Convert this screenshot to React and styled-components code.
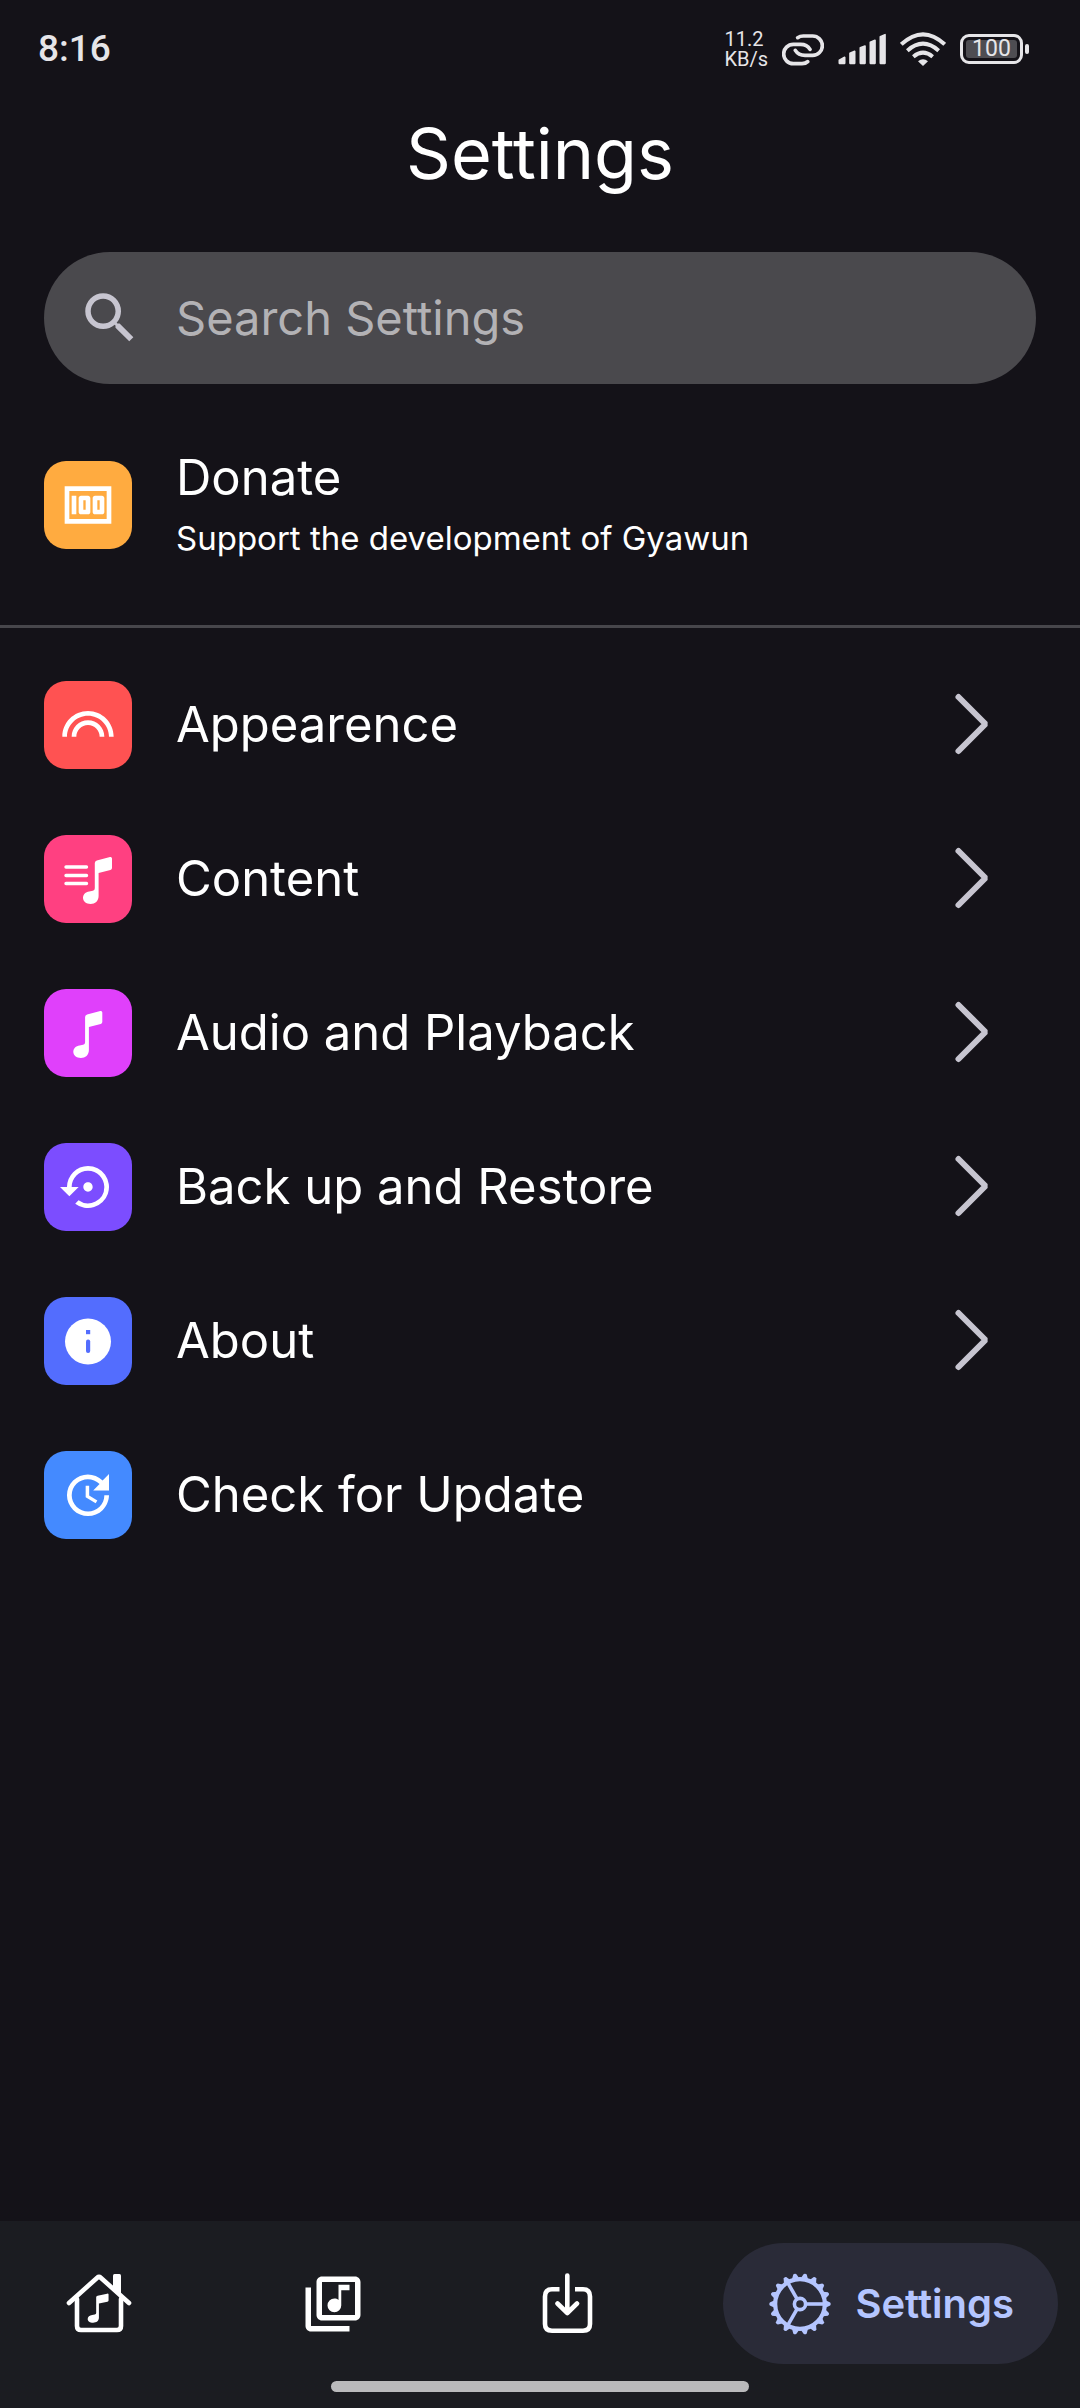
import React from "react";
import styled, { createGlobalStyle } from "styled-components";
import {
  MdLooks,
  MdMoney,
  MdOutlineLibraryMusic,
  MdSearch,
  MdSettingsBackupRestore,
  MdUpdate,
} from "react-icons/md";

const GlobalStyle = createGlobalStyle`
  *, *::before, *::after { box-sizing: border-box; }
  body {
    margin: 0;
    background: #141218;
    color: #fff;
    font-family: Inter, "Open Sans", sans-serif;
  }
  button, input { font: inherit; color: inherit; }
  svg { display: block; flex: none; }
`;

const Screen = styled.div`
  display: flex;
  flex-direction: column;
  min-height: 100vh;
`;

const StatusBar = styled.div`
  display: flex;
  align-items: center;
  justify-content: space-between;
  height: 98px;
  padding: 0 51px 0 38px;
  color: #e6e5e8;
  font-family: Roboto, sans-serif;
`;

const Clock = styled.time`
  font-size: 37px;
  font-weight: 500;
  line-height: 44px;
`;

const StatusIcons = styled.div`
  display: flex;
  align-items: center;
  gap: 14px;
`;

const NetSpeed = styled.div`
  display: flex;
  flex-direction: column;
  font-size: 20px;
  line-height: 20px;
`;

const Battery = styled.div`
  display: flex;
  align-items: center;
  gap: 2px;

  &::after {
    content: "";
    width: 4px;
    height: 10px;
    border-radius: 2px;
    background: #e6e5e8;
  }
`;

const BatteryBody = styled.div`
  width: 63px;
  height: 30px;
  padding: 3px;
  border: 3px solid #e6e5e8;
  border-radius: 9px;
`;

const BatteryLevel = styled.div`
  height: 18px;
  border-radius: 3px;
  background: #4e4d52;
  font-size: 23px;
  line-height: 18px;
  text-align: center;
`;

const Title = styled.h1`
  margin: 0;
  padding: 16px 44px 58px;
  font-size: 70px;
  font-weight: 400;
  line-height: 80px;
  text-align: center;
`;

const Main = styled.main`
  flex: 1;
`;

const SearchBox = styled.label`
  display: flex;
  align-items: center;
  gap: 33px;
  height: 132px;
  margin: 0 44px 44px;
  padding: 0 33px;
  border-radius: 66px;
  background: #4a494d;
  color: #c7c5d0;
`;

const SearchInput = styled.input`
  flex: 1;
  min-width: 0;
  padding: 0;
  border: 0;
  outline: 0;
  background: none;
  color: #fff;
  font-size: 47px;
  line-height: 60px;

  &::placeholder {
    color: #b3b2b5;
    opacity: 1;
  }
`;

const List = styled.ul`
  margin: 0;
  padding: 0;
  list-style: none;
`;

const RowButton = styled.button`
  display: flex;
  align-items: center;
  gap: 44px;
  width: 100%;
  height: 154px;
  padding: 0 66px 0 44px;
  border: 0;
  background: none;
  text-align: left;
  cursor: pointer;
`;

const Tile = styled.span`
  display: flex;
  align-items: center;
  justify-content: center;
  flex: none;
  width: 88px;
  height: 88px;
  border-radius: 22px;
  background: ${(p) => p.$color};
`;

const RowText = styled.span`
  flex: 1;
  padding-top: ${(p) => (p.$stacked ? "6px" : "0")};
`;

const RowTitle = styled.span`
  display: block;
  font-size: 49px;
  line-height: 60px;
`;

const RowNote = styled.span`
  display: block;
  font-size: 33px;
  line-height: 60px;
`;

const Divider = styled.hr`
  height: 3px;
  margin: 43px 0 20px;
  border: 0;
  background: #47464b;
`;

const BottomArea = styled.footer`
  display: flex;
  flex-direction: column;
  align-items: center;
  gap: 17px;
  padding: 22px 22px 16px;
  background: #1b1c21;
`;

const Nav = styled.nav`
  display: flex;
  align-items: center;
  justify-content: space-between;
  width: 100%;
`;

const NavItem = styled.button`
  display: flex;
  align-items: center;
  gap: 22px;
  height: 121px;
  padding: 0 44px;
  border: 0;
  border-radius: 61px;
  background: ${(p) => (p.$active ? "#2a2b38" : "transparent")};
  color: ${(p) => (p.$active ? "#b4c5ff" : "#fff")};
  font-size: 40px;
  font-weight: 600;
  cursor: pointer;
`;

const HomeIndicator = styled.div`
  width: 418px;
  max-width: 60%;
  height: 11px;
  border-radius: 6px;
  background: #bababc;
`;

const NOTE =
  "M50.8 28q0-2.1 2-2.6L66 22q2-.4 2 1.5V33q0 1.6-1.6 2L54.6 38v23c0 5-3.5 8-8 8-4.5 0-7.6-2.7-7.6-6.2 0-3.5 2.7-5.8 6.2-6.4l3.6-.7q2-.5 2-2.5z";

const LinkIcon = () => (
  <svg width="42" height="33" viewBox="249 66 126 99" fill="none" stroke="currentColor" strokeWidth="11" strokeLinecap="round">
    <path d="M296 80Q303 75 313 75H341A28 28 0 0 1 341 133H318Q298 133 289 118" />
    <path d="M326 152Q320 158 309 158H283A28 28 0 0 1 283 100H305Q324 100 333 115" />
  </svg>
);

const SignalIcon = () => (
  <svg width="48" height="32" viewBox="414 71 144 96" fill="currentColor" stroke="currentColor" strokeWidth="5" strokeLinejoin="round">
    <path d="M418 153l16-9v18h-16zM450 132l14-6v36h-14zM481 115l14-5v52h-14zM511 99l14-6v69h-14zM541 82l14-6v86h-14z" />
  </svg>
);

const WifiIcon = () => (
  <svg width="46" height="34" viewBox="597 66 138 102" fill="none" stroke="currentColor" strokeWidth="12">
    <path d="M601 103Q666 43 731 103M619 122Q666 80 713 122M637 140Q666 116 695 140" />
    <path d="M651 154Q666 142 681 154L666 168z" fill="currentColor" stroke="none" />
  </svg>
);

const MusicListIcon = () => (
  <svg width="88" height="88" viewBox="0 0 88 88" fill="#fff">
    <path d="M22 32h20.500M22 40.500h20.500M22 48.500h20.500" stroke="#fff" strokeWidth="3.400" strokeLinecap="round" />
    <path d={NOTE} />
  </svg>
);

const MusicNoteIcon = () => (
  <svg width="88" height="88" viewBox="9.700 0 88 88" fill="#fff">
    <path d={NOTE} />
  </svg>
);

const InfoIcon = () => (
  <svg width="88" height="88" viewBox="0 0 88 88" fill="#536dfe">
    <circle cx="44" cy="44.500" r="23" fill="#fff" />
    <rect x="42" y="33" width="4.200" height="4.200" />
    <rect x="42" y="42.500" width="4.200" height="13.500" rx="2" />
  </svg>
);

const Chevron = () => (
  <svg width="66" height="66" viewBox="0 0 66 66" fill="none" stroke="#c7c5d0" strokeWidth="6" strokeLinecap="round" strokeLinejoin="bevel">
    <path d="M10.500 5L37.500 32L10.500 59" />
  </svg>
);

const HomeIcon = () => (
  <svg width="66" height="66" viewBox="0 0 66 66" fill="none" stroke="currentColor" strokeWidth="4.600" strokeLinecap="round" strokeLinejoin="round">
    <path d="M3 32L31.500 6.500Q33 5 34.500 6.500L63 32" />
    <path d="M11 28V55Q11 59 15 59H51Q55 59 55 55V28" />
    <path d="M47 4.500Q47 3 48.500 3H53.500Q55 3 55 4.500V24L47 17z" fill="currentColor" stroke="none" />
    <path d={NOTE} transform="translate(-6.400 9) scale(.72 .62)" fill="currentColor" stroke="none" />
  </svg>
);

const DownloadIcon = () => (
  <svg width="66" height="66" viewBox="0 0 66 66" fill="none" stroke="currentColor" strokeWidth="4.600">
    <path d="M25.500 18.300H18Q11 18.300 11 25.500V53Q11 59.700 18 59.700H49Q56 59.700 56 53V25.500Q56 18.300 49 18.300H41" />
    <path d="M33.300 4.500V41.500M23.500 32.500L33.300 42L43 32.500" strokeLinecap="round" strokeLinejoin="round" />
  </svg>
);

const TEETH = Array.from({ length: 18 }, (_, i) => i * 20);

const GearIcon = () => (
  <svg width="66" height="66" viewBox="-33 -33 66 66" fill="none" stroke="currentColor">
    <circle r="24.800" strokeWidth="4.200" />
    <circle r="5.600" strokeWidth="3.600" />
    {[0, 120, 240].map((a) => (
      <path key={a} d="M6 0H24" strokeWidth="3.600" transform={`rotate(${a})`} />
    ))}
    {TEETH.map((a) => (
      <path
        key={a}
        d="M26 -3.500L30.200 -1.500Q31.400 0 30.200 1.500L26 3.500z"
        fill="currentColor"
        stroke="none"
        transform={`rotate(${a})`}
      />
    ))}
  </svg>
);

const ROWS = [
  { label: "Appearence", color: "#ff5252", icon: <MdLooks size={56} />, opens: true },
  { label: "Content", color: "#ff4081", icon: <MusicListIcon />, opens: true },
  { label: "Audio and Playback", color: "#e040fb", icon: <MusicNoteIcon />, opens: true },
  { label: "Back up and Restore", color: "#7c4dff", icon: <MdSettingsBackupRestore size={56} />, opens: true },
  { label: "About", color: "#536dfe", icon: <InfoIcon />, opens: true },
  { label: "Check for Update", color: "#448aff", icon: <MdUpdate size={56} />, opens: false },
];

function SettingsRow({ label, note, color, icon, opens }) {
  return (
    <RowButton type="button">
      <Tile $color={color}>{icon}</Tile>
      <RowText $stacked={Boolean(note)}>
        <RowTitle>{label}</RowTitle>
        {note && <RowNote>{note}</RowNote>}
      </RowText>
      {opens && <Chevron />}
    </RowButton>
  );
}

export default function App() {
  return (
    <Screen>
      <GlobalStyle />
      <StatusBar>
        <Clock>8:16</Clock>
        <StatusIcons>
          <NetSpeed>
            <span>11.2</span>
            <span>KB/s</span>
          </NetSpeed>
          <LinkIcon />
          <SignalIcon />
          <WifiIcon />
          <Battery>
            <BatteryBody>
              <BatteryLevel>100</BatteryLevel>
            </BatteryBody>
          </Battery>
        </StatusIcons>
      </StatusBar>
      <Title>Settings</Title>
      <Main>
        <SearchBox>
          <MdSearch size={66} />
          <SearchInput type="text" placeholder="Search Settings" aria-label="Search Settings" />
        </SearchBox>
        <SettingsRow
          label="Donate"
          note="Support the development of Gyawun"
          color="#ffab40"
          icon={<MdMoney size={56} />}
        />
        <Divider />
        <List>
          {ROWS.map((row) => (
            <li key={row.label}>
              <SettingsRow {...row} />
            </li>
          ))}
        </List>
      </Main>
      <BottomArea>
        <Nav>
          <NavItem type="button" aria-label="Home">
            <HomeIcon />
          </NavItem>
          <NavItem type="button" aria-label="Library">
            <MdOutlineLibraryMusic size={66} />
          </NavItem>
          <NavItem type="button" aria-label="Downloads">
            <DownloadIcon />
          </NavItem>
          <NavItem type="button" aria-current="page" $active>
            <GearIcon />
            Settings
          </NavItem>
        </Nav>
        <HomeIndicator />
      </BottomArea>
    </Screen>
  );
}
